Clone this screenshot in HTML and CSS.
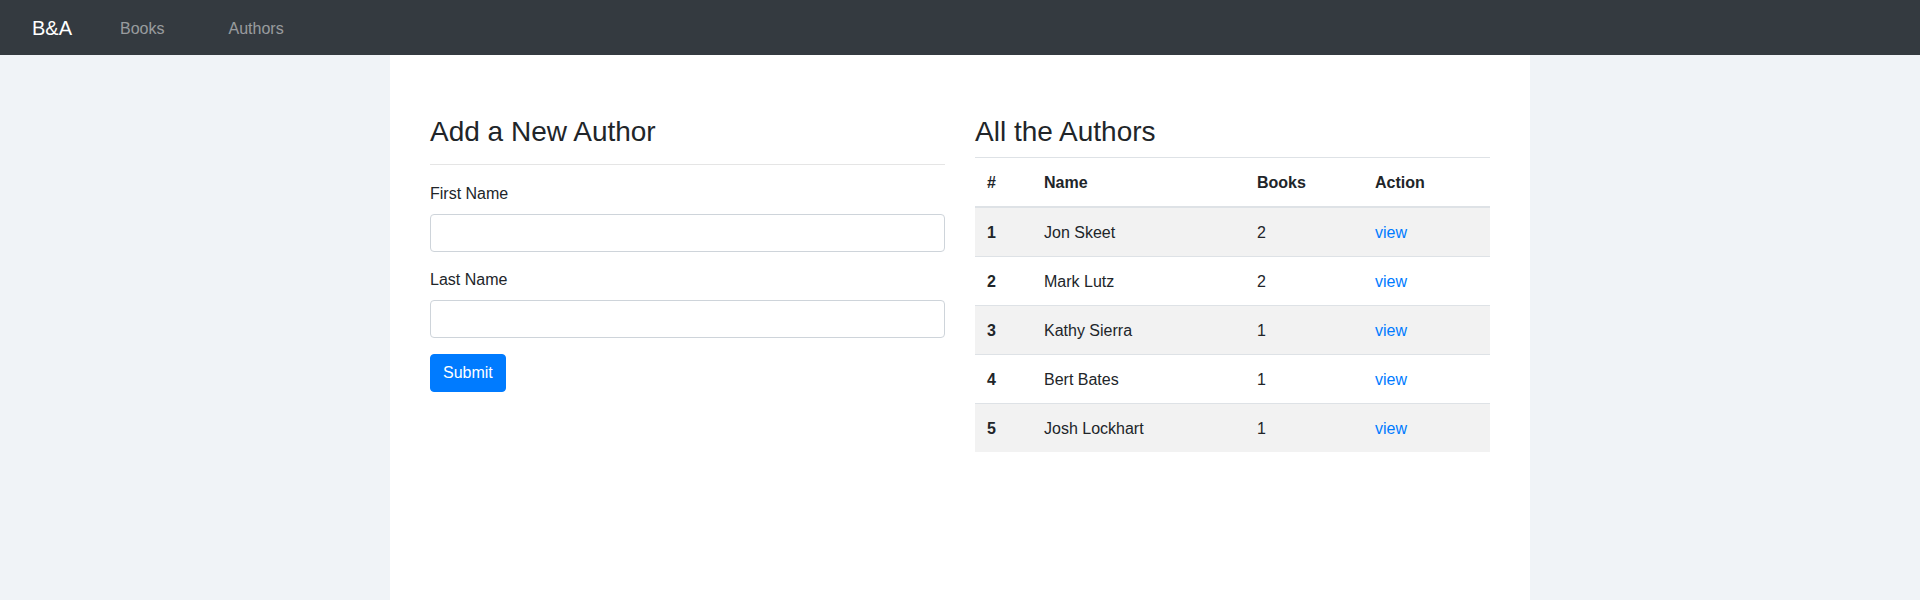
FILE: index.html
```html
<!DOCTYPE html>
<html lang="en">
<head>
<meta charset="utf-8">
<title>B&amp;A</title>
<link rel="stylesheet" href="styles.css">
</head>
<body>
<nav class="navbar">
  <a class="brand" href="#">B&amp;A</a>
  <ul class="nav">
    <li><a class="nav-link" href="#">Books</a></li>
    <li><a class="nav-link" href="#">Authors</a></li>
  </ul>
</nav>
<main class="container">
  <div class="row">
    <section class="col">
      <h3 class="title">Add a New Author</h3>
      <hr class="divider">
      <form class="form">
        <div class="form-group">
          <label class="label" for="first">First Name</label>
          <input class="input" id="first" type="text">
        </div>
        <div class="form-group">
          <label class="label" for="last">Last Name</label>
          <input class="input" id="last" type="text">
        </div>
        <button class="btn" type="button">Submit</button>
      </form>
    </section>
    <section class="col">
      <h3 class="title">All the Authors</h3>
      <table class="table">
        <colgroup>
          <col class="c-num"><col class="c-name"><col class="c-books"><col>
        </colgroup>
        <thead>
          <tr><th>#</th><th>Name</th><th>Books</th><th>Action</th></tr>
        </thead>
        <tbody>
          <tr><th>1</th><td>Jon Skeet</td><td>2</td><td><a class="link" href="#">view</a></td></tr>
          <tr><th>2</th><td>Mark Lutz</td><td>2</td><td><a class="link" href="#">view</a></td></tr>
          <tr><th>3</th><td>Kathy Sierra</td><td>1</td><td><a class="link" href="#">view</a></td></tr>
          <tr><th>4</th><td>Bert Bates</td><td>1</td><td><a class="link" href="#">view</a></td></tr>
          <tr><th>5</th><td>Josh Lockhart</td><td>1</td><td><a class="link" href="#">view</a></td></tr>
        </tbody>
      </table>
    </section>
  </div>
</main>
</body>
</html>
```

FILE: styles.css
```css
* { box-sizing: border-box; }

html, body {
  margin: 0;
  padding: 0;
}

body {
  background: #f0f3f7;
  font-family: "Liberation Sans", Arial, sans-serif;
  font-size: 16px;
  line-height: 1.5;
  color: #212529;
  min-height: 600px;
}

.navbar {
  height: 55px;
  background: #343a40;
  display: flex;
  align-items: center;
  padding: 0 32px;
}

.brand {
  color: #fff;
  font-size: 20px;
  line-height: 30px;
  text-decoration: none;
  margin-right: 16px;
}

.nav {
  list-style: none;
  margin: 0;
  padding: 0;
  display: flex;
}

.nav-link {
  display: block;
  color: rgba(255, 255, 255, 0.5);
  text-decoration: none;
  padding: 0 32px;
  line-height: 24px;
  margin-top: 2px;
}

.container {
  width: 1140px;
  margin: 0 auto;
  background: #fff;
  min-height: 545px;
  padding: 60px 40px 0;
}

.row {
  display: grid;
  grid-template-columns: 1fr 1fr;
  column-gap: 30px;
}

.title {
  font-size: 28px;
  font-weight: 500;
  line-height: 1.2;
  margin: 0 0 8px;
}

.divider {
  border: 0;
  border-top: 1px solid rgba(0, 0, 0, 0.1);
  margin: 15px 0 17px;
}

.form-group {
  margin-bottom: 16px;
}

.label {
  display: inline-block;
  margin-bottom: 8px;
}

.input {
  display: block;
  width: 100%;
  height: 38px;
  padding: 6px 12px;
  font: inherit;
  color: #495057;
  background: #fff;
  border: 1px solid #ced4da;
  border-radius: 4px;
}

.btn {
  font: inherit;
  line-height: 24px;
  color: #fff;
  background: #007bff;
  border: 1px solid #007bff;
  border-radius: 4px;
  padding: 6px 12px;
  cursor: pointer;
}

.table {
  width: 100%;
  border-collapse: collapse;
  color: #212529;
}

.c-num { width: 57px; }
.c-name { width: 213px; }
.c-books { width: 118px; }

.table th,
.table td {
  padding: 13px 12px 11px;
  text-align: left;
  vertical-align: top;
  border-top: 1px solid #dee2e6;
}

.table th { font-weight: 700; }

.table thead th {
  border-bottom: 2px solid #dee2e6;
}

.table tbody tr:nth-child(odd) {
  background: rgba(0, 0, 0, 0.05);
}

.link {
  color: #007bff;
  text-decoration: none;
}
```
